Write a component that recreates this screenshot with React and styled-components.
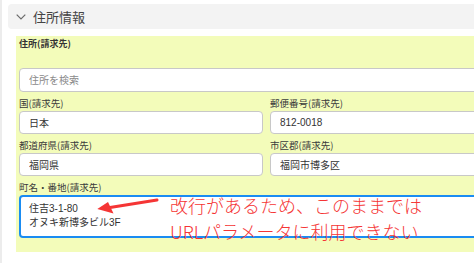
import React from "react";
import styled, { createGlobalStyle } from "styled-components";

const GlobalStyle = createGlobalStyle`
  html, body {
    margin: 0;
    padding: 0;
    background: #ffffff;
    overflow: hidden;
  }
  body {
    font-family: "Liberation Sans", "Noto Sans CJK JP", sans-serif;
    color: #333;
  }
  * { box-sizing: border-box; }
`;

const Page = styled.div`
  width: 474px;
  height: 263px;
  overflow: hidden;
  border-left: 2px solid #ececec;
  padding: 4px 0 0 6px;
`;

const SectionHeader = styled.div`
  display: flex;
  align-items: center;
  gap: 7px;
  height: 25px;
  width: 520px;
  padding-left: 8px;
  background: #f3f3f3;
  border-radius: 4px 0 0 4px;
`;

const HeaderTitle = styled.span`
  font-family: "Noto Sans CJK JP", sans-serif;
  font-size: 13px;
  color: #444;
  line-height: 25px;
`;

const Panel = styled.div`
  margin: 7px 0 0 8px;
  width: 520px;
  background: #f3fcba;
  padding: 0 0 14px 3px;
`;

const SectionLabel = styled.div`
  font-family: "Noto Sans CJK JP", sans-serif;
  font-size: 9px;
  font-weight: 700;
  line-height: 16px;
  color: #333;
  margin-bottom: 16px;
`;

const inputBase = `
  display: block;
  font-family: "Liberation Sans", "Noto Sans CJK JP", sans-serif;
  font-size: 10px;
  color: #333;
  background: #fff;
  border: 1px solid #c8c8c8;
  border-radius: 4px;
  outline: none;
  margin: 0;
`;

const TextInput = styled.input`
  ${inputBase}
  width: ${(p) => (p.$wide ? "495px" : "100%")};
  height: ${(p) => (p.$tall ? "24px" : "23px")};
  padding: 0 9px;
  &::placeholder {
    color: #8a8a8a;
  }
`;

const Grid = styled.div`
  display: grid;
  grid-template-columns: 244px 244px;
  column-gap: 7px;
`;

const Field = styled.div`
  display: flex;
  flex-direction: column;
  position: relative;
  grid-column: ${(p) => (p.$full ? "1 / -1" : "auto")};
`;

const FieldLabel = styled.div`
  font-family: "Noto Sans CJK JP", sans-serif;
  font-size: 9.5px;
  line-height: 14px;
  padding: 4px 0 1px;
  color: #3a3a3a;
  white-space: nowrap;
`;

const TextArea = styled.textarea`
  ${inputBase}
  width: 100%;
  height: 43px;
  resize: none;
  overflow: hidden;
  padding: 5px 9px 0 8px;
  line-height: 13.5px;
  border: 2px solid #1a8cf2;
`;

const Annotation = styled.div`
  position: absolute;
  left: 151px;
  top: 16px;
  font-family: "Noto Sans CJK JP", sans-serif;
  font-size: 18px;
  font-weight: 300;
  line-height: 26px;
  color: #f53535;
  white-space: nowrap;
  pointer-events: none;
`;

const Arrow = styled.svg`
  position: absolute;
  left: 76px;
  top: 22px;
  overflow: visible;
  pointer-events: none;
`;

export default function App() {
  return (
    <>
      <GlobalStyle />
      <Page>
        <SectionHeader>
          <svg width="10" height="6" viewBox="0 0 10 6" fill="none">
            <path d="M0.7 0.7 L5 5 L9.3 0.7" stroke="#6a6a6a" strokeWidth="1.2" />
          </svg>
          <HeaderTitle>住所情報</HeaderTitle>
        </SectionHeader>
        <Panel>
          <SectionLabel>住所(請求先)</SectionLabel>
          <TextInput $wide $tall placeholder="住所を検索" readOnly />
          <Grid>
            <Field>
              <FieldLabel>国(請求先)</FieldLabel>
              <TextInput value="日本" readOnly />
            </Field>
            <Field>
              <FieldLabel>郵便番号(請求先)</FieldLabel>
              <TextInput value="812-0018" readOnly />
            </Field>
            <Field>
              <FieldLabel>都道府県(請求先)</FieldLabel>
              <TextInput value="福岡県" readOnly />
            </Field>
            <Field>
              <FieldLabel>市区郡(請求先)</FieldLabel>
              <TextInput value="福岡市博多区" readOnly />
            </Field>
            <Field $full>
              <FieldLabel>町名・番地(請求先)</FieldLabel>
              <TextArea value={"住吉3-1-80\nオヌキ新博多ビル3F"} readOnly />
              <Arrow width="65" height="17" viewBox="0 0 65 17">
                <line x1="62" y1="2" x2="15" y2="9.5" stroke="#f53535" strokeWidth="3" strokeLinecap="round" />
                <polygon points="2.3,11 13,4 18.5,15.5" fill="#f53535" />
              </Arrow>
              <Annotation>
                改行があるため、このままでは
                <br />
                URLパラメータに利用できない
              </Annotation>
            </Field>
          </Grid>
        </Panel>
      </Page>
    </>
  );
}
